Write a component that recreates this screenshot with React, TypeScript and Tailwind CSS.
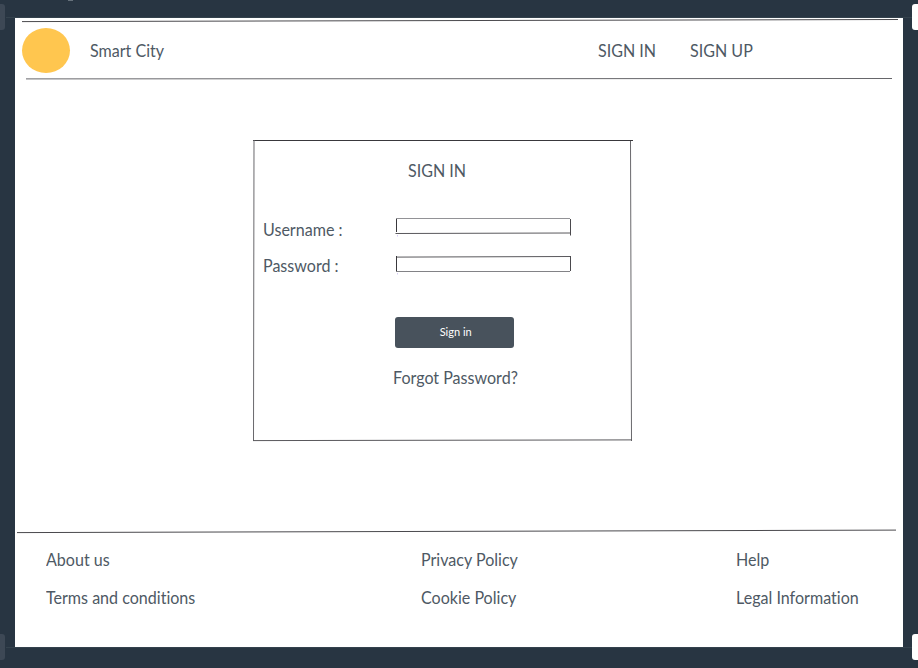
import type { ReactNode } from 'react';

type Line = [number, number, number, number, string?];

/** Thin hand-sketched strokes, drawn over the box that holds them. */
function Strokes({ lines }: { lines: Line[] }) {
  return (
    <svg className="pointer-events-none absolute inset-0 h-full w-full overflow-visible" aria-hidden="true">
      {lines.map(([x1, y1, x2, y2, color = '#39383c'], i) => (
        <line key={i} x1={x1} y1={y1} x2={x2} y2={y2} stroke={color} strokeWidth="1" />
      ))}
    </svg>
  );
}

/** Slightly condensed lettering used for every caption. */
function Text({ children }: { children: ReactNode }) {
  return (
    <span className="inline-block origin-left scale-x-[0.945] whitespace-nowrap [font-variant-ligatures:none]">
      {children}
    </span>
  );
}

function Handles({ place }: { place: string }) {
  return (
    <div className={`flex justify-between ${place}`}>
      <span className="h-[26px] w-[5px] rounded-r-[3px] bg-[#3d4855]" />
      <span className="h-[26px] w-[6px] rounded-l-[3px] bg-white" />
    </div>
  );
}

function Field({ label, name, type, lines }: { label: string; name: string; type: string; lines: Line[] }) {
  return (
    <div className="flex h-[36px] items-start">
      <label htmlFor={name} className="w-[133px] leading-6">
        <Text>{label}</Text>
      </label>
      <div className="relative h-[16px] w-[175px]">
        <input id={name} type={type} className="block h-full w-full bg-transparent px-1 text-xs outline-none" />
        <Strokes lines={lines} />
      </div>
    </div>
  );
}

function LinkColumn({ width, items }: { width: string; items: string[] }) {
  return (
    <div className={`flex flex-col gap-[14px] leading-6 ${width}`}>
      {items.map((item) => (
        <a key={item}>
          <Text>{item}</Text>
        </a>
      ))}
    </div>
  );
}

export default function App() {
  return (
    <div className="relative h-[668px] w-[918px] overflow-hidden bg-[#283542] pt-[18px] pl-[15px] font-['Lato',sans-serif] text-[17px] text-[#4e5964]">
      <Handles place="absolute inset-x-0 top-[4px]" />
      <Handles place="absolute inset-x-0 top-[634px]" />
      <span className="absolute top-[17px] left-[6px] h-px w-[906px] bg-[#34424d]" />
      <span className="absolute top-[647px] left-[6px] h-px w-[906px] bg-[#34424d]" />
      <span className="absolute top-0 left-[68px] h-px w-[5px] bg-[#66717b]" />

      <div className="relative flex h-[629px] w-[888px] flex-col bg-white">
        <header className="relative flex h-[61px] items-center pt-[3px] pl-[7.3px]">
          <span className="h-[45px] w-[48px] rounded-[50%] bg-[#ffc64f]" />
          <span className="ml-5 w-[507.7px] pt-[2px]">
            <Text>Smart City</Text>
          </span>
          <nav className="flex pt-[2px]">
            <a className="w-[92px]">
              <Text>SIGN IN</Text>
            </a>
            <a>
              <Text>SIGN UP</Text>
            </a>
          </nav>
          <Strokes lines={[[7, 3.6, 883, 1.5, '#4a494d'], [11, 60.9, 877, 60.5, '#66666a']]} />
        </header>

        <main className="flex h-[452px] pt-[60px] pl-[238px]">
          <form className="relative h-[302px] w-[379px]">
            <Strokes
              lines={[
                [0, 1.5, 380, 1.5],
                [1, 1, 0.5, 302, '#69686c'],
                [377.5, 2, 378.5, 302, '#69686c'],
                [0, 301.6, 379, 300.9, '#59585c'],
              ]}
            />
            <h1 className="pt-[20px] pl-[155px] leading-6">
              <Text>SIGN IN</Text>
            </h1>
            <div className="pt-[35px] pl-[10px]">
              <Field
                label="Username :"
                name="username"
                type="text"
                lines={[
                  [0, 0.5, 174, 0.5, '#929296'],
                  [0.5, 1, 0.5, 14],
                  [-0.5, 15.5, 174, 15, '#59585c'],
                  [174.5, 1, 174.5, 17.5, '#4a494d'],
                  [1.5, 17, 1.5, 18.5, '#d5ccf5'],
                ]}
              />
              <Field
                label="Password :"
                name="password"
                type="password"
                lines={[
                  [0, 3.1, 175, 2.5, '#59585c'],
                  [0.5, 2, 0.5, 17],
                  [0, 17.5, 174, 17.5, '#828286'],
                  [174.5, 2, 174.5, 17, '#4a494d'],
                  [1.5, 19, 1.5, 20.5, '#d5ccf5'],
                ]}
              />
            </div>
            <div className="ml-[142.4px] flex w-[119px] flex-col items-start pt-[27px]">
              <button
                type="button"
                className="h-[31px] w-[118.6px] rounded-[3px] bg-[#48525c] pt-px pb-[2px] pl-[2px] text-[11px] text-white"
              >
                Sign in
              </button>
              <a className="mt-[18px] -ml-[2.4px] leading-6 whitespace-nowrap">
                <Text>Forgot Password?</Text>
              </a>
            </div>
          </form>
        </main>

        <footer className="relative flex pt-[17px] pl-[31px]">
          <Strokes lines={[[2, 1.6, 881, -0.9, '#4a494d']]} />
          <LinkColumn width="w-[375px]" items={['About us', 'Terms and conditions']} />
          <LinkColumn width="w-[315px]" items={['Privacy Policy', 'Cookie Policy']} />
          <LinkColumn width="w-[150px]" items={['Help', 'Legal Information']} />
        </footer>
      </div>
    </div>
  );
}
